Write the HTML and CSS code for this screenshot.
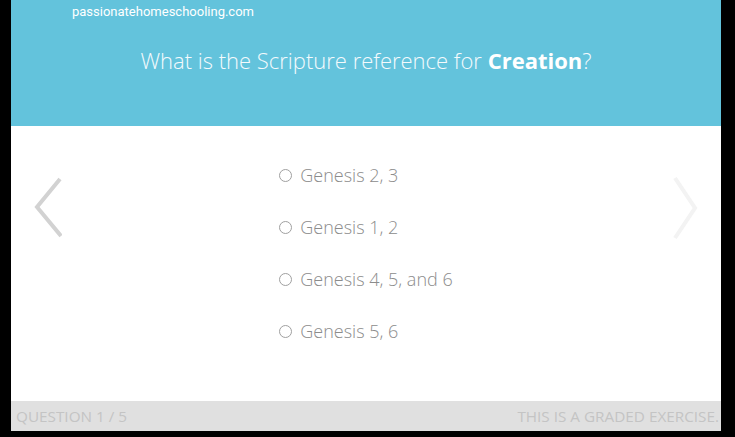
FILE: index.html
```html
<!DOCTYPE html>
<html lang="en">

<head>
    <meta charset="UTF-8">
    <meta name="viewport" content="width=device-width, initial-scale=1.0">
    <title>Quiz</title>
    <link rel="stylesheet" href="styles.css">
</head>

<body>
    <div class="quiz">
        <div class="cabecera">
            <div class="sitio">passionatehomeschooling.com</div>
            <h1 class="pregunta">What is the Scripture reference for <b>Creation</b>?</h1>
        </div>
        <div class="cuerpo">
            <button class="nav nav-prev" aria-label="Previous">
                <svg width="30" height="64" viewBox="0 0 30 64">
                    <polyline points="28,3 5,31 29,60" fill="none" stroke="#d2d2d2" stroke-width="4" />
                </svg>
            </button>
            <div class="centro">
                <ul class="opciones">
                    <li class="opcion"><span class="radio"></span>Genesis 2, 3</li>
                    <li class="opcion"><span class="radio"></span>Genesis 1, 2</li>
                    <li class="opcion"><span class="radio"></span>Genesis 4, 5, and 6</li>
                    <li class="opcion"><span class="radio"></span>Genesis 5, 6</li>
                </ul>
            </div>
            <button class="nav nav-next" aria-label="Next">
                <svg width="30" height="64" viewBox="0 0 30 64">
                    <polyline points="5,2 25,32 5,62" fill="none" stroke="#f3f3f3" stroke-width="4" />
                </svg>
            </button>
        </div>
        <div class="pie">
            <span>QUESTION 1 / 5</span>
            <span>THIS IS A GRADED EXERCISE.</span>
        </div>
    </div>
</body>

</html>
```

FILE: styles.css
```css
body {
    margin: 0;
    background-color: #000;
    font-family: "Open Sans", Arial, sans-serif;
}

.quiz {
    width: 710px;
    margin-left: 11px;
    background-color: #fff;
}

.cabecera {
    height: 126px;
    background-color: #63c3dc;
    color: #fff;
    box-sizing: border-box;
    padding-top: 4px;
}

.sitio {
    font-family: Roboto, Arial, sans-serif;
    font-size: 13px;
    margin-left: 61px;
    line-height: 16px;
}

.pregunta {
    margin: 25px 0 0;
    font-size: 22px;
    font-weight: 300;
    text-align: center;
    line-height: 30px;
    color: #f4fafc;
}

.pregunta b {
    font-weight: 700;
    color: #fff;
}

.cuerpo {
    display: flex;
    height: 275px;
}

.nav {
    background: transparent;
    border: none;
    padding: 0;
    margin-top: 50px;
    height: 64px;
    cursor: pointer;
}

.nav-prev {
    margin-left: 21px;
}

.nav-next {
    margin-right: 21px;
}

.centro {
    flex: 1;
    display: flex;
    justify-content: center;
    padding-top: 23px;
}

.opciones {
    list-style: none;
    margin: 0;
    padding: 0;
}

.opcion {
    display: flex;
    align-items: center;
    height: 52px;
    font-size: 18px;
    font-weight: 300;
    color: #8c8c8c;
}

.radio {
    width: 11px;
    height: 11px;
    border: 1.5px solid #a0a0a0;
    border-radius: 50%;
    margin-right: 8px;
}

.pie {
    display: flex;
    justify-content: space-between;
    height: 30px;
    line-height: 30px;
    padding: 0 2px 0 5px;
    background-color: #e0e0e0;
    color: #c4c4c4;
    font-size: 15.3px;
}
```
